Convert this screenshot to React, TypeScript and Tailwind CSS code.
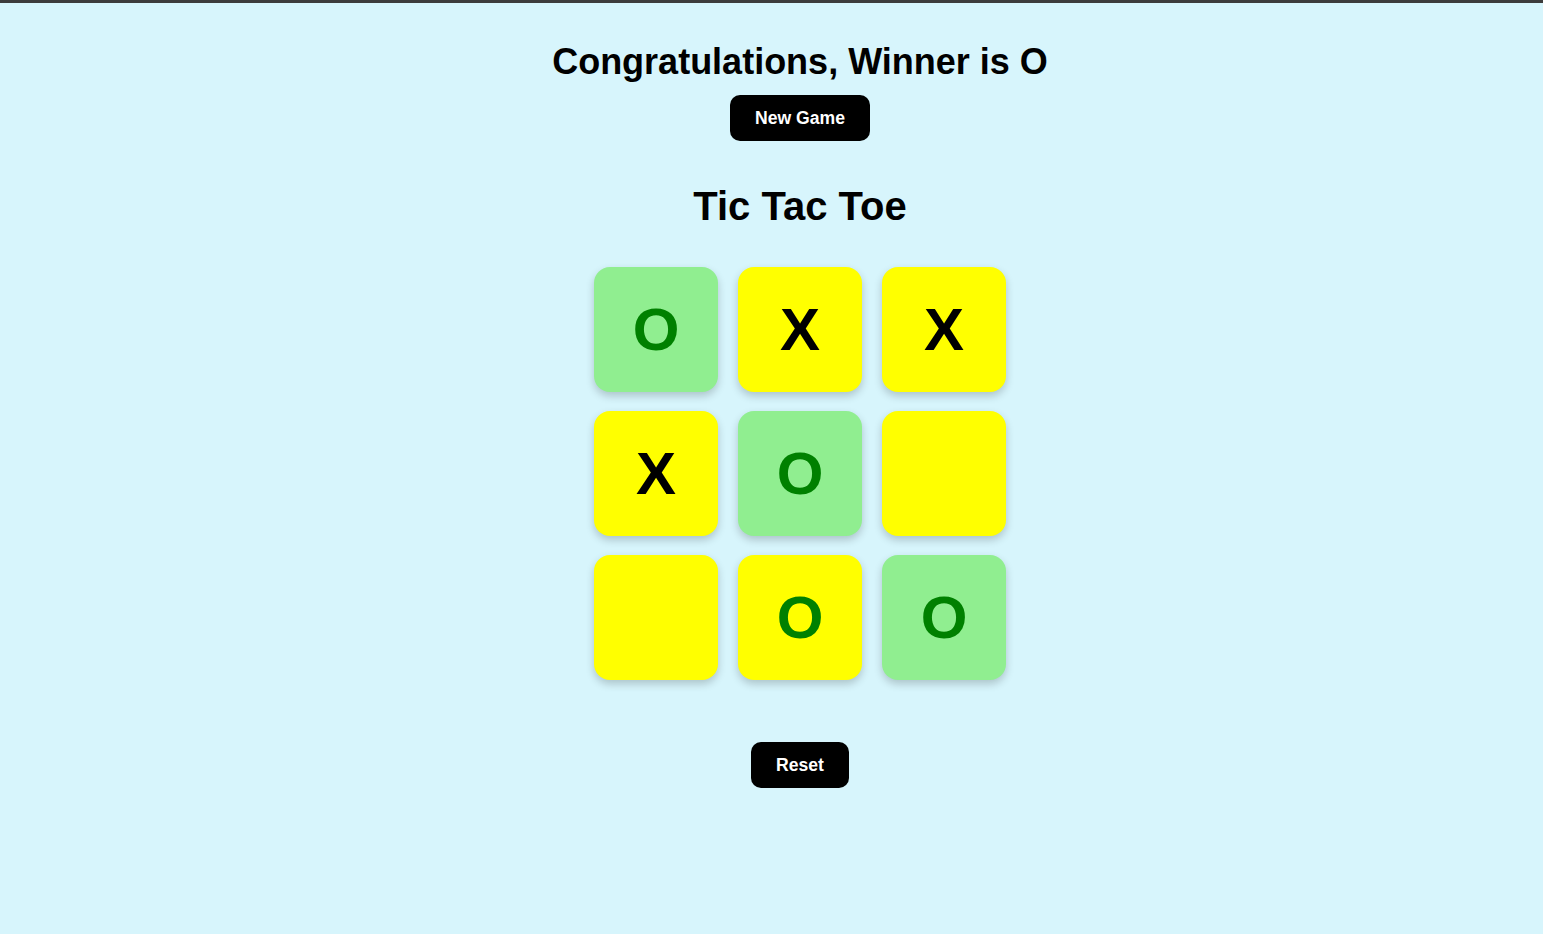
const board: string[] = ['O', 'X', 'X', 'X', 'O', '', '', 'O', 'O'];
const winning = [0, 4, 8];

const Cell = ({ value, win }: { value: string; win: boolean }) => {
  return (
    <div
      className={`flex h-[125px] w-[124px] items-center justify-center rounded-[16px] text-[60px] font-bold shadow-[0_4px_8px_rgba(0,0,0,0.2)] ${
        win ? 'bg-[#90ee90]' : 'bg-[#ffff00]'
      } ${value === 'O' ? 'text-[#008000]' : 'text-black'}`}
    >
      {value}
    </div>
  );
};

export default function App() {
  return (
    <main className="min-h-screen w-full bg-[#d7f5fc] font-['Liberation_Sans',Arial,sans-serif]">
      {/* top strip */}
      <div className="h-[3px] w-full bg-[#3c3c3c]" />

      <div className="flex flex-col items-center pl-[57px] pt-[38px]">
        <h1 className="text-[36px] font-bold leading-[41px] text-black">
          Congratulations, Winner is O
        </h1>
        <button className="mt-[13px] h-[46px] rounded-[10px] bg-black px-[25px] text-[17.6px] font-bold text-white">
          New Game
        </button>

        <h2 className="mt-[42px] text-[40px] font-bold leading-[46px] text-black">
          Tic Tac Toe
        </h2>

        <div className="mt-[38px] grid grid-cols-[124px_124px_124px] gap-x-[20px] gap-y-[19px]">
          {board.map((v, i) => (
            <Cell key={i} value={v} win={winning.includes(i)} />
          ))}
        </div>

        <button className="mt-[62px] h-[46px] rounded-[10px] bg-black px-[25px] text-[17.6px] font-bold text-white">
          Reset
        </button>
      </div>
    </main>
  );
}
